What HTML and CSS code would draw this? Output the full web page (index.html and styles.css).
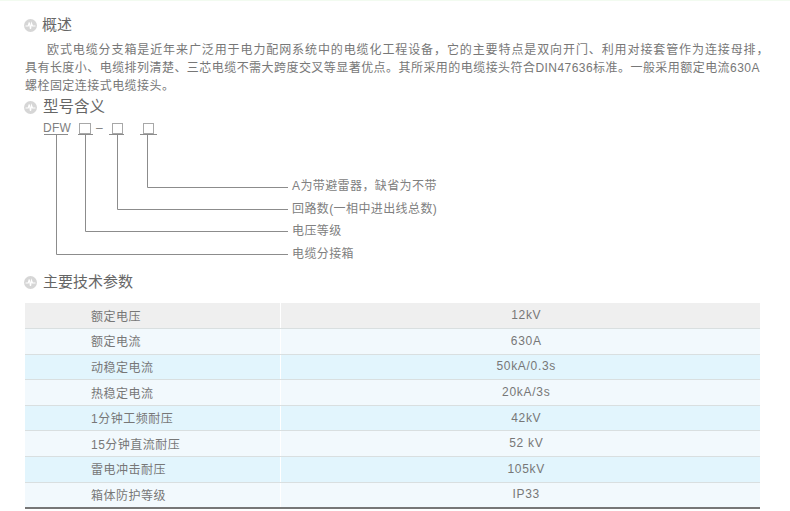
FILE: index.html
```html
<!DOCTYPE html>
<html lang="zh-CN">
<head>
<meta charset="utf-8">
<title>欧式电缆分支箱</title>
<link rel="stylesheet" href="styles.css">
</head>
<body>
<main class="page">
  <h2 class="heading h-first"><svg class="icon" viewBox="0 0 13 13"><circle cx="6.500" cy="6.500" r="6.500" fill="#d6d6d6"/><path d="M1.500 7H4.200L5.300 3.500 6.500 10 7.500 4.500 8.500 7H11.500" fill="none" stroke="#fff" stroke-width="1.200"/></svg><span>概述</span></h2>
  <p class="intro">欧式电缆分支箱是近年来广泛用于电力配网系统中的电缆化工程设备，它的主要特点是双向开门、利用对接套管作为连接母排，<br><span class="flush">具有长度小、电缆排列清楚、三芯电缆不需大跨度交叉等显著优点。其所采用的电缆接头符合DIN47636标准。一般采用额定电流630A</span><br><span class="flush">螺栓固定连接式电缆接头。</span></p>
  <h2 class="heading h-wide"><svg class="icon" viewBox="0 0 13 13"><circle cx="6.500" cy="6.500" r="6.500" fill="#d6d6d6"/><path d="M1.500 7H4.200L5.300 3.500 6.500 10 7.500 4.500 8.500 7H11.500" fill="none" stroke="#fff" stroke-width="1.200"/></svg><span>型号含义</span></h2>
  <div class="diagram">
    <svg class="lines" viewBox="0 0 300 138" width="300" height="138">
      <g fill="none" stroke="#8c8c8c" stroke-width="1">
        <path d="M19 17.500H43M31.500 17.500V137.500H263"/>
        <path d="M53 17.500H68M60.500 17.500V114.500H263"/>
        <path d="M84 17.500H99M92.500 17.500V92.500H263"/>
        <path d="M115 17.500H132M122.500 17.500V70.500H263"/>
      </g>
      <g fill="none" stroke="#a8a8a8" stroke-width="1">
        <rect x="54.500" y="6.500" width="11" height="10"/>
        <rect x="87.500" y="6.500" width="10" height="10"/>
        <rect x="118.500" y="6.500" width="10" height="10"/>
      </g>
    </svg>
    <span class="code">DFW</span>
    <span class="dash">–</span>
    <span class="note n1">A为带避雷器，缺省为不带</span>
    <span class="note n2">回路数(一相中进出线总数)</span>
    <span class="note n3">电压等级</span>
    <span class="note n4">电缆分接箱</span>
  </div>
  <h2 class="heading h-third"><svg class="icon" viewBox="0 0 13 13"><circle cx="6.500" cy="6.500" r="6.500" fill="#d6d6d6"/><path d="M1.500 7H4.200L5.300 3.500 6.500 10 7.500 4.500 8.500 7H11.500" fill="none" stroke="#fff" stroke-width="1.200"/></svg><span>主要技术参数</span></h2>
  <table class="specs">
    <tr class="r-head"><th>额定电压</th><td>12kV</td></tr>
    <tr class="r-light"><th>额定电流</th><td>630A</td></tr>
    <tr class="r-blue"><th>动稳定电流</th><td>50kA/0.3s</td></tr>
    <tr class="r-light"><th>热稳定电流</th><td>20kA/3s</td></tr>
    <tr class="r-blue"><th>1分钟工频耐压</th><td>42kV</td></tr>
    <tr class="r-light"><th>15分钟直流耐压</th><td>52 kV</td></tr>
    <tr class="r-blue"><th>雷电冲击耐压</th><td>105kV</td></tr>
    <tr class="r-light r-last"><th>箱体防护等级</th><td>IP33</td></tr>
  </table>
</main>
</body>
</html>
```
FILE: styles.css
```css
html, body { margin: 0; padding: 0; background: #fff; }
body {
  width: 790px;
  height: 511px;
  overflow: hidden;
  font-family: "Liberation Sans", "Noto Sans CJK SC", sans-serif;
  color: #666;
  border-top: 1px solid #f2fbf0;
  box-sizing: border-box;
}
.page { padding: 0 30px 0 24px; }
.heading {
  display: flex;
  align-items: center;
  gap: 5px;
  margin: 0;
  font-size: 15px;
  line-height: 20px;
  font-weight: 400;
  color: #666;
}
.icon { width: 13px; height: 13px; flex: none; }
.h-first { margin-top: 14px; }
.h-wide { font-size: 15.500px; margin-top: 2px; gap: 6px; }
.h-third { margin-top: 17px; gap: 6px; }
.intro {
  margin: 6px 0 0 1px;
  font-size: 12px;
  line-height: 18px;
  letter-spacing: 0.900px;
  color: #777;
  white-space: nowrap;
  text-indent: 22px;
}
.flush { letter-spacing: 0.450px; }
.diagram { position: relative; height: 138px; margin-left: 1px; font-size: 12px; color: #808080; }
.lines { position: absolute; left: 0; top: 0; }
.code { position: absolute; left: 18px; top: 4px; line-height: 14px; letter-spacing: 0.300px; }
.dash { position: absolute; left: 71px; top: 4px; line-height: 14px; }
.note { position: absolute; left: 267px; line-height: 16px; white-space: nowrap; letter-spacing: 0.400px; }
.n1 { top: 61px; }
.n2 { top: 84px; }
.n3 { top: 106px; }
.n4 { top: 129px; }
.specs {
  margin: 11px 0 0 1px;
  width: 735px;
  border-collapse: collapse;
  table-layout: fixed;
  font-size: 12px;
  color: #777;
}
.specs tr { height: 25.600px; }
.specs th, .specs td {
  padding: 0 0 1px;
  font-weight: 400;
  border-bottom: 1px solid #d9dfe0;
}
.specs th { width: 255px; text-align: left; padding-left: 66px; box-sizing: border-box; letter-spacing: 0.500px; border-right: 1px solid #fff; }
.specs td { text-align: center; letter-spacing: 0.700px; padding-left: 12px; }
.r-head { background: #efefef; }
.r-light { background: #f2f9fd; }
.r-blue { background: #e2f5fd; }
.r-last th, .r-last td { border-bottom: 2px solid #777; }
```
